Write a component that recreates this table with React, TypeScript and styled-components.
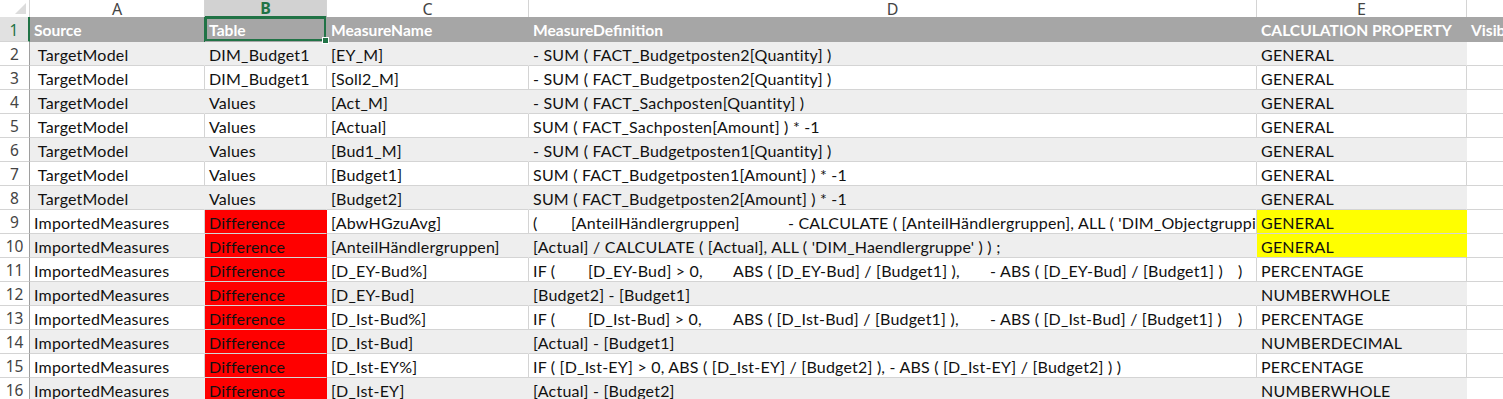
import React from 'react';
import styled, { createGlobalStyle } from 'styled-components';

const GlobalStyle = createGlobalStyle`
  html, body { margin: 0; padding: 0; background: #fff; overflow: hidden; }
  body { width: 1503px; height: 399px; }
`;

const COLS = '30px 175px 122px 202px 728px 210px 80px';
const GREEN = '#217346';

const Sheet = styled.div`
  width: 1503px;
  height: 399px;
  overflow: hidden;
  background: #fff;
`;

const Grid = styled.div`
  display: flex;
  flex-direction: column;
  width: 1547px;
`;

const Row = styled.div<{ $h: number }>`
  display: grid;
  grid-template-columns: ${COLS};
  height: ${(p) => p.$h}px;
`;

const Corner = styled.div`
  display: flex;
  align-items: flex-end;
  justify-content: flex-end;
  padding: 0 3px 3px 0;
  border-right: 1px solid #d4d4d4;
  border-bottom: 1px solid #bfbfbf;
  background: #fff;
`;

const Triangle = styled.span`
  width: 0;
  height: 0;
  border-left: 11px solid transparent;
  border-bottom: 11px solid #dcdcdc;
`;

const ColHead = styled.div<{ $active?: boolean }>`
  display: flex;
  align-items: center;
  justify-content: center;
  font-family: 'Noto Sans', 'Open Sans', sans-serif;
  font-size: 16px;
  line-height: 16px;
  color: ${(p) => (p.$active ? GREEN : '#444')};
  font-weight: ${(p) => (p.$active ? 700 : 400)};
  background: ${(p) => (p.$active ? '#d2d2d2' : '#fff')};
  border-right: 1px solid #d4d4d4;
  border-bottom: ${(p) => (p.$active ? `2px solid ${GREEN}` : '1px solid #bfbfbf')};
`;

const RowNum = styled.div<{ $active?: boolean }>`
  display: flex;
  align-items: center;
  justify-content: center;
  font-family: 'Noto Sans', 'Open Sans', sans-serif;
  font-size: 15.5px;
  color: ${(p) => (p.$active ? GREEN : '#444')};
  background: ${(p) => (p.$active ? '#e1e1e1' : '#fff')};
  border-right: ${(p) => (p.$active ? `2px solid ${GREEN}` : '1px solid #9e9e9e')};
  border-bottom: 1px solid #d4d4d4;
  padding-top: 1px;
`;

const Cell = styled.div<{ $bg: string; $grid?: boolean; $head?: boolean; $selected?: boolean }>`
  position: relative;
  display: flex;
  align-items: center;
  overflow: ${(p) => (p.$selected ? 'visible' : 'hidden')};
  padding: 2px 0 0 4px;
  white-space: pre;
  font-family: Lato, 'Liberation Sans', sans-serif;
  font-size: ${(p) => (p.$head ? '15.6px' : '16px')};
  letter-spacing: ${(p) => (p.$head ? '0' : '0.2px')};
  font-weight: ${(p) => (p.$head ? 700 : 400)};
  color: ${(p) => (p.$head ? '#fff' : '#111')};
  background: ${(p) => p.$bg};
  border-right: 1px solid ${(p) => (p.$grid ? '#d4d4d4' : p.$bg)};
  border-bottom: 1px solid ${(p) => (p.$head ? '#a6a6a6' : '#d4d4d4')};
  box-shadow: ${(p) => (p.$selected ? `inset 0 0 0 2px ${GREEN}, -1px 0 0 0 ${GREEN}` : 'none')};
`;

const Handle = styled.span`
  position: absolute;
  right: -3px;
  bottom: -3px;
  width: 5px;
  height: 5px;
  background: ${GREEN};
  border: 1px solid #fff;
  z-index: 2;
`;

const Tab = styled.span<{ $w?: number }>`
  display: inline-block;
  flex-shrink: 0;
  width: ${(p) => (p.$w ? `${p.$w}px` : 'auto')};
`;

type Def = string | Array<[string, number?]>;

interface DataRow {
  n: number;
  a: string;
  b: string;
  c: string;
  d: Def;
  e: string;
  red?: boolean;
  yellow?: boolean;
}

const ifTabs = (x: string, div: string): Def => [
  ['IF (', 55],
  [`[${x}] > 0,`, 145],
  [`ABS ( [${x}] / [${div}] ),`, 257],
  [`- ABS ( [${x}] / [${div}] )`, 248],
  [')'],
];

const rows: DataRow[] = [
  { n: 2, a: ' TargetModel', b: 'DIM_Budget1', c: '[EY_M]', d: '- SUM ( FACT_Budgetposten2[Quantity] )', e: 'GENERAL' },
  { n: 3, a: ' TargetModel', b: 'DIM_Budget1', c: '[Soll2_M]', d: '- SUM ( FACT_Budgetposten2[Quantity] )', e: 'GENERAL' },
  { n: 4, a: ' TargetModel', b: 'Values', c: '[Act_M]', d: '- SUM ( FACT_Sachposten[Quantity] )', e: 'GENERAL' },
  { n: 5, a: ' TargetModel', b: 'Values', c: '[Actual]', d: 'SUM ( FACT_Sachposten[Amount] ) * -1', e: 'GENERAL' },
  { n: 6, a: ' TargetModel', b: 'Values', c: '[Bud1_M]', d: '- SUM ( FACT_Budgetposten1[Quantity] )', e: 'GENERAL' },
  { n: 7, a: ' TargetModel', b: 'Values', c: '[Budget1]', d: 'SUM ( FACT_Budgetposten1[Amount] ) * -1', e: 'GENERAL' },
  { n: 8, a: ' TargetModel', b: 'Values', c: '[Budget2]', d: 'SUM ( FACT_Budgetposten2[Amount] ) * -1', e: 'GENERAL' },
  {
    n: 9, a: 'ImportedMeasures', b: 'Difference', c: '[AbwHGzuAvg]', red: true, yellow: true, e: 'GENERAL',
    d: [['(', 38], ['[AnteilHändlergruppen]', 217], ["- CALCULATE ( [AnteilHändlergruppen], ALL ( 'DIM_Objectgruppie"]],
  },
  { n: 10, a: 'ImportedMeasures', b: 'Difference', c: '[AnteilHändlergruppen]', red: true, yellow: true, e: 'GENERAL', d: "[Actual] / CALCULATE ( [Actual], ALL ( 'DIM_Haendlergruppe' ) ) ;" },
  { n: 11, a: 'ImportedMeasures', b: 'Difference', c: '[D_EY-Bud%]', red: true, e: 'PERCENTAGE', d: ifTabs('D_EY-Bud', 'Budget1') },
  { n: 12, a: 'ImportedMeasures', b: 'Difference', c: '[D_EY-Bud]', red: true, e: 'NUMBERWHOLE', d: '[Budget2] - [Budget1]' },
  { n: 13, a: 'ImportedMeasures', b: 'Difference', c: '[D_Ist-Bud%]', red: true, e: 'PERCENTAGE', d: ifTabs('D_Ist-Bud', 'Budget1') },
  { n: 14, a: 'ImportedMeasures', b: 'Difference', c: '[D_Ist-Bud]', red: true, e: 'NUMBERDECIMAL', d: '[Actual] - [Budget1]' },
  { n: 15, a: 'ImportedMeasures', b: 'Difference', c: '[D_Ist-EY%]', red: true, e: 'PERCENTAGE', d: 'IF ( [D_Ist-EY] > 0, ABS ( [D_Ist-EY] / [Budget2] ), - ABS ( [D_Ist-EY] / [Budget2] ) )' },
  { n: 16, a: 'ImportedMeasures', b: 'Difference', c: '[D_Ist-EY]', red: true, e: 'NUMBERWHOLE', d: '[Actual] - [Budget2]' },
];

const renderDef = (d: Def) =>
  typeof d === 'string' ? d : d.map(([t, w], i) => <Tab key={i} $w={w}>{t}</Tab>);

export default function App() {
  return (
    <Sheet>
      <GlobalStyle />
      <Grid>
        <Row $h={17}>
          <Corner><Triangle /></Corner>
          <ColHead>A</ColHead>
          <ColHead $active>B</ColHead>
          <ColHead>C</ColHead>
          <ColHead>D</ColHead>
          <ColHead>E</ColHead>
          <ColHead>F</ColHead>
        </Row>
        <Row $h={25}>
          <RowNum $active>1</RowNum>
          <Cell $bg="#a6a6a6" $head>Source</Cell>
          <Cell $bg="#a6a6a6" $head $selected>Table<Handle /></Cell>
          <Cell $bg="#a6a6a6" $head>MeasureName</Cell>
          <Cell $bg="#a6a6a6" $head>MeasureDefinition</Cell>
          <Cell $bg="#a6a6a6" $head>CALCULATION PROPERTY</Cell>
          <Cell $bg="#a6a6a6" $head>Visible</Cell>
        </Row>
        {rows.map((r) => {
          const band = r.n % 2 === 0;
          const base = band ? '#eeeeee' : '#fff';
          const grid = !band;
          return (
            <Row $h={24} key={r.n}>
              <RowNum>{r.n}</RowNum>
              <Cell $bg={base} $grid={grid}>{r.a}</Cell>
              <Cell $bg={r.red ? '#ff0000' : base} $grid={grid && !r.red}>{r.b}</Cell>
              <Cell $bg={base} $grid={grid}>{r.c}</Cell>
              <Cell $bg={base} $grid={grid}>{renderDef(r.d)}</Cell>
              <Cell $bg={r.yellow ? '#ffff00' : base} $grid={grid && !r.yellow}>{r.e}</Cell>
              <Cell $bg="#fff" $grid>{''}</Cell>
            </Row>
          );
        })}
      </Grid>
    </Sheet>
  );
}
